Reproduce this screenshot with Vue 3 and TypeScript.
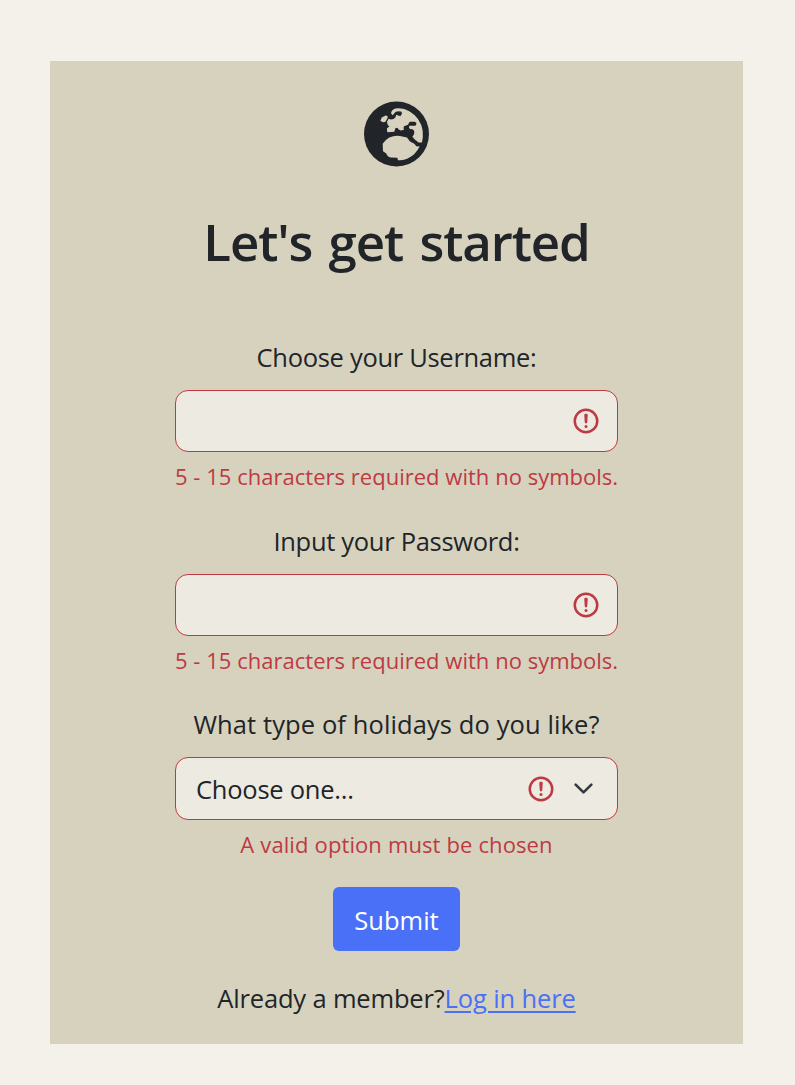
<script setup lang="ts">
import { ref } from 'vue'

interface TextField {
  id: string
  type: string
  label: string
  feedback: string
}

const fields: TextField[] = [
  { id: 'username', type: 'text', label: 'Choose your Username:', feedback: '5 - 15 characters required with no symbols.' },
  { id: 'password', type: 'password', label: 'Input your Password:', feedback: '5 - 15 characters required with no symbols.' },
]
const values = ref<Record<string, string>>({ username: '', password: '' })
const holiday = ref('')
</script>

<template>
  <main class="page">
    <form class="card" novalidate @submit.prevent>
      <svg class="globe" viewBox="42 33 195 195" aria-hidden="true">
        <circle cx="139.5" cy="130.5" r="97.5" fill="#212529" />
        <g fill="#d7d2bd">
          <path d="M123 68 Q125 57 136 54 Q158 50 178 62 Q212 82 218 120 Q220 140 216 156 L206 156 L195 148 L187 139 Q195 131 192 121 Q190 115 181 116 L177 112 L178 106 L196 106 Q200 103 199 97 L194 94 L179 94 L174 103 L162 107 Q159 112 162 118 L153 120 L147 118 L142 112 L136 113 L133 124 L113 125 Q110 121 111 113 L118 108 L113 103 L111 94 L116 85 Q128 90 136 81 L139 73 L151 77 Q158 71 155 64 Q147 60 137 64 L128 74 Z" />
          <path d="M92 89 L95 81 L107 75 Q114 75 113 82 L107 93 Q101 97 94 93 Z" />
          <path d="M98 160 Q104 149 118 141 Q137 133 157 138 L171 141 L180 153 L193 160 L199 167 L209 168 Q196 194 173 204 Q160 211 144 209 L142 202 L122 201 Q112 199 109 189 L99 182 Z" />
        </g>
      </svg>

      <h1 class="title">Let's get started</h1>

      <div v-for="field in fields" :key="field.id" class="group">
        <label :for="field.id" class="label">{{ field.label }}</label>
        <div class="control">
          <input :id="field.id" v-model="values[field.id]" class="input" :type="field.type" />
          <svg class="alert" viewBox="0 0 12 12" fill="none" stroke="#bd3a45" aria-hidden="true">
            <circle cx="6" cy="6" r="4.5" />
            <path stroke-linejoin="round" d="M5.8 3.6h.4L6 6.5z" />
            <circle cx="6" cy="8.2" r=".6" fill="#bd3a45" stroke="none" />
          </svg>
        </div>
        <p class="feedback">{{ field.feedback }}</p>
      </div>

      <div class="group">
        <label for="holiday" class="label holiday">What type of holidays do you like?</label>
        <div class="control tall">
          <select id="holiday" v-model="holiday" class="input select">
            <option value="">Choose one...</option>
          </select>
          <svg class="alert" viewBox="0 0 12 12" fill="none" stroke="#bd3a45" aria-hidden="true">
            <circle cx="6" cy="6" r="4.5" />
            <path stroke-linejoin="round" d="M5.8 3.6h.4L6 6.5z" />
            <circle cx="6" cy="8.2" r=".6" fill="#bd3a45" stroke="none" />
          </svg>
          <svg class="chevron" viewBox="0 0 16 16" fill="none" stroke="#343a40" stroke-width="2" stroke-linecap="round" stroke-linejoin="round" aria-hidden="true">
            <path d="m2 5 6 6 6-6" />
          </svg>
        </div>
        <p class="feedback option">A valid option must be chosen</p>
      </div>

      <button class="submit" type="submit">Submit</button>
      <p class="member"><span class="question">Already a member?</span><a class="login" href="#">Log in here</a></p>
    </form>
  </main>
</template>

<style>
body {
  margin: 0;
  background: #f4f1eb;
}
</style>

<style scoped>
.page {
  box-sizing: border-box;
  height: 1085px;
  padding: 61px 52px 41px 50px;
  background: #f4f1eb;
  color: #212529;
  font: 25.5px/40px "Open Sans", "Noto Sans", sans-serif;
}
.card {
  box-sizing: border-box;
  height: 983px;
  padding-top: 40px;
  display: flex;
  flex-direction: column;
  align-items: center;
  background: #d7d2bd;
  white-space: nowrap;
}
.globe {
  width: 65px;
  height: 66px;
  flex: none;
}
.title {
  margin: 43px 0 65px;
  height: 62px;
  font-size: 51px;
  line-height: 62px;
  font-weight: 600;
  letter-spacing: -1.1px;
  word-spacing: 4.2px;
}
.group {
  width: 443px;
  height: 183.7px;
  flex: none;
  display: flex;
  flex-direction: column;
  align-items: center;
}
.label {
  height: 40px;
  margin-bottom: 13px;
  letter-spacing: -0.3px;
}
.holiday {
  letter-spacing: 0.1px;
}
.control {
  box-sizing: border-box;
  width: 443px;
  height: 62px;
  flex: none;
  display: flex;
  align-items: center;
  border: 1px solid #bd3a45;
  border-radius: 13px;
  background: #edeae1;
  padding-right: 16px;
}
.tall {
  height: 63px;
  padding-right: 23px;
}
.input {
  flex: 1;
  min-width: 0;
  height: 60px;
  padding: 0 0 0 20px;
  border: 0;
  outline: 0;
  appearance: none;
  background: transparent;
  color: inherit;
  font: inherit;
  letter-spacing: -0.25px;
}
.alert {
  width: 30px;
  height: 30px;
  flex: none;
}
.chevron {
  width: 21px;
  height: 21px;
  margin-left: 17px;
  flex: none;
}
.feedback {
  margin: 7px 0 0;
  height: 34px;
  line-height: 34px;
  font-size: 22px;
  word-spacing: 0.15px;
  color: #bd3a45;
}
.option {
  letter-spacing: 0.1px;
}
.submit {
  width: 127px;
  height: 64px;
  flex: none;
  margin: -1px 0 27px;
  padding: 2px 0 0;
  border: 0;
  border-radius: 6px;
  background: #4a70f7;
  color: #fff;
  font: inherit;
}
.member {
  margin: 0;
  display: flex;
  letter-spacing: -0.13px;
}
.question {
  letter-spacing: -0.17px;
}
.login {
  color: #4a70f7;
  text-decoration: underline;
  text-decoration-thickness: 2px;
  text-underline-offset: 3px;
}
</style>
